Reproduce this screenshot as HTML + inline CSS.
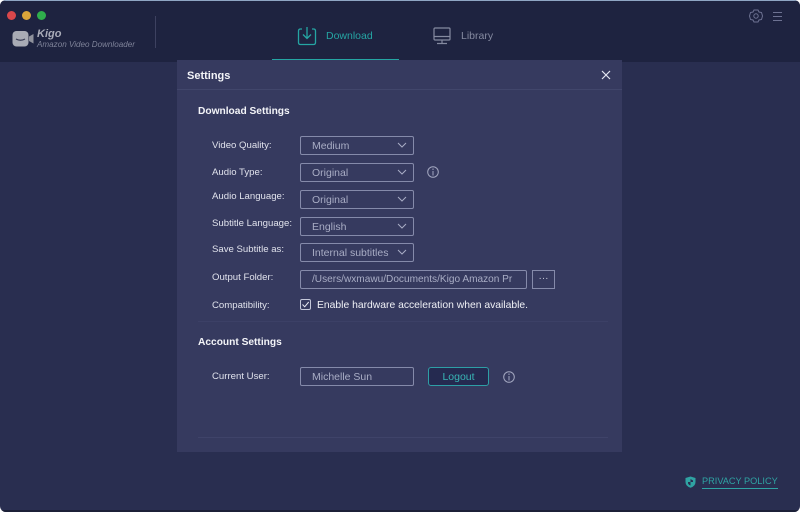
<!DOCTYPE html>
<html><head><meta charset="utf-8"><style>
html,body{margin:0;padding:0;width:800px;height:512px;overflow:hidden;background:#fff}
*{box-sizing:border-box}
body{font-family:"Liberation Sans",sans-serif;position:relative}
.a{position:absolute;white-space:nowrap}
.l{position:absolute;left:212px;margin-top:1px;font-size:9.6px;color:#e0e2ec;line-height:14px;white-space:nowrap}
.s{position:absolute;left:300px;width:114px;height:19px;border:1px solid #858aaa;border-radius:2px;font-size:10.5px;color:#a9adc5;line-height:18px;padding-left:11px;white-space:nowrap;overflow:hidden}
.c{position:absolute;left:397px;width:10px;height:6px}
h3{position:absolute;margin:1px 0 0;font-size:10.2px;font-weight:bold;color:#f3f4f8;white-space:nowrap;line-height:14px}
</style></head><body>
<div class="a" style="left:0;top:0;width:800px;height:512px;background:#292e50;border-radius:6px;overflow:hidden">
<div class="a" style="left:0;top:0;width:800px;height:62px;background:#1e2340"></div>
<div class="a" style="left:0;top:0;width:800px;height:1px;background:#8fa6c4"></div>
<div class="a" style="left:0;top:510px;width:800px;height:2px;background:#1c2038"></div>
</div>
<div class="a" style="left:7px;top:11px;width:9px;height:9px;border-radius:50%;background:#d9474b"></div>
<div class="a" style="left:22px;top:11px;width:9px;height:9px;border-radius:50%;background:#dba53a"></div>
<div class="a" style="left:37px;top:11px;width:9px;height:9px;border-radius:50%;background:#2fae4c"></div>
<svg class="a" style="left:12px;top:31px" width="22" height="16" viewBox="0 0 22 16"><rect x="0.500" y="0" width="16" height="15.500" rx="4" fill="#a9abb5"/><path d="M17 5.500l4.500-2.500v9.500l-4.500-2.500z" fill="#8f919c"/><path d="M4 8q4.500 2.500 9 0" stroke="#3a3d55" stroke-width="1.200" fill="none"/></svg>
<div class="a" style="left:37px;top:27px;font-size:11px;font-weight:bold;font-style:italic;color:#a9abb8;line-height:14px">Kigo</div>
<div class="a" style="left:37px;top:39px;font-size:8.100px;font-style:italic;color:#7f8399;line-height:12px">Amazon Video Downloader</div>
<div class="a" style="left:155px;top:16px;width:1px;height:32px;background:#3d4160"></div>

<svg class="a" style="left:297px;top:26px" width="20" height="20" viewBox="0 0 20 20" fill="none" stroke="#25a5a3" stroke-width="1.300"><path d="M5 3H3.500Q1.500 3 1.500 5V16.500Q1.500 18.500 3.500 18.500H16.500Q18.500 18.500 18.500 16.500V5Q18.500 3 16.500 3H15"/><path d="M10 1V12M6 8.500L10 12.500L14 8.500"/></svg>
<div class="a" style="left:326px;top:29px;font-size:10.500px;color:#25a5a3;line-height:14px">Download</div>
<div class="a" style="left:272px;top:59px;width:127px;height:1px;background:#25a5a3"></div>
<svg class="a" style="left:433px;top:27px" width="18" height="18" viewBox="0 0 18 18" fill="none" stroke="#858aa0" stroke-width="1.200"><rect x="1" y="1" width="16" height="12" rx="1"/><path d="M1 9.500H17M9 13V16M4 16.500H14"/></svg>
<div class="a" style="left:461px;top:29px;font-size:10.500px;color:#858aa0;line-height:14px">Library</div>
<svg class="a" style="left:749px;top:9px" width="14" height="14" viewBox="0 0 14 14" fill="none" stroke="#6d7292" stroke-width="1"><path d="M5 1H9L10 3L12.500 3.500L13.500 7L12.500 10.500L10 11L9 13H5L4 11L1.500 10.500L0.500 7L1.500 3.500L4 3Z"/><circle cx="7" cy="7" r="2.200"/></svg>
<div class="a" style="left:773px;top:12px;width:9px;height:1px;background:#6d7292"></div>
<div class="a" style="left:773px;top:16px;width:9px;height:1px;background:#6d7292"></div>
<div class="a" style="left:773px;top:20px;width:9px;height:1px;background:#6d7292"></div>

<div class="a" style="left:177px;top:60px;width:445px;height:392px;background:#363a5f"></div>
<div class="a" style="left:177px;top:89px;width:445px;height:1px;background:#41466b"></div>
<h3 style="left:187px;top:68px;font-size:11px;line-height:15px">Settings</h3>
<svg class="a" style="left:601px;top:70px" width="10" height="10" viewBox="0 0 10 10" stroke="#e4e6f2" stroke-width="1.200"><path d="M1 1L9 9M9 1L1 9"/></svg>
<h3 style="left:198px;top:104px">Download Settings</h3>

<div class="l" style="top:138px">Video Quality:</div>
<div class="s" style="top:136px">Medium</div>
<div class="l" style="top:165px">Audio Type:</div>
<div class="s" style="top:163px">Original</div>
<div class="l" style="top:189px">Audio Language:</div>
<div class="s" style="top:190px">Original</div>
<div class="l" style="top:216px">Subtitle Language:</div>
<div class="s" style="top:217px">English</div>
<div class="l" style="top:242px">Save Subtitle as:</div>
<div class="s" style="top:243px">Internal subtitles</div>
<div class="l" style="top:270px">Output Folder:</div>
<div class="s" style="top:270px;width:227px;font-size:10.100px">/Users/wxmawu/Documents/Kigo Amazon Pr</div>
<div class="l" style="top:298px">Compatibility:</div>

<svg class="c" style="top:142px" viewBox="0 0 10 6" fill="none" stroke="#a9adc5"><path d="M1 1L5 5L9 1"/></svg>
<svg class="c" style="top:169px" viewBox="0 0 10 6" fill="none" stroke="#a9adc5"><path d="M1 1L5 5L9 1"/></svg>
<svg class="c" style="top:196px" viewBox="0 0 10 6" fill="none" stroke="#a9adc5"><path d="M1 1L5 5L9 1"/></svg>
<svg class="c" style="top:223px" viewBox="0 0 10 6" fill="none" stroke="#a9adc5"><path d="M1 1L5 5L9 1"/></svg>
<svg class="c" style="top:249px" viewBox="0 0 10 6" fill="none" stroke="#a9adc5"><path d="M1 1L5 5L9 1"/></svg>

<svg class="a" style="left:427px;top:166px" width="12" height="12" viewBox="0 0 12 12" fill="none" stroke="#a3a7c0"><circle cx="6" cy="6" r="5.300"/><path d="M6 5V9.500M6 2.500V4"/></svg>
<div class="a" style="left:532px;top:270px;width:23px;height:19px;border:1px solid #858aaa;color:#c8cadb;font-size:10px;line-height:16px;text-align:center">···</div>
<div class="a" style="left:300px;top:299px;width:11px;height:11px;border:1px solid #c5c8da;border-radius:2px"></div>
<svg class="a" style="left:300px;top:299px" width="11" height="11" viewBox="0 0 11 11" fill="none" stroke="#e8e9f2"><path d="M2.500 5.500L4.700 7.800L8.700 3"/></svg>
<div class="a" style="left:317px;top:299px;font-size:10.350px;color:#f0f1f6;line-height:14px">Enable hardware acceleration when available.</div>
<div class="a" style="left:198px;top:321px;width:410px;height:1px;background:#3c4066"></div>

<h3 style="left:198px;top:335px">Account Settings</h3>
<div class="l" style="top:369px">Current User:</div>
<div class="s" style="top:367px">Michelle Sun</div>
<div class="a" style="left:428px;top:367px;width:61px;height:19px;border:1px solid #2e9fa6;border-radius:3px;background:#252a50;color:#38b5b5;font-size:10.500px;line-height:18px;text-align:center">Logout</div>
<svg class="a" style="left:503px;top:371px" width="12" height="12" viewBox="0 0 12 12" fill="none" stroke="#a3a7c0"><circle cx="6" cy="6" r="5.300"/><path d="M6 5V9.500M6 2.500V4"/></svg>
<div class="a" style="left:198px;top:437px;width:410px;height:1px;background:#3f4369"></div>

<svg class="a" style="left:685px;top:476px" width="11" height="12" viewBox="0 0 11 12"><path d="M5.500 0.500L10.500 2V6Q10.500 10 5.500 11.800Q0.500 10 0.500 6V2Z" fill="#2fa3a3"/><path d="M5.500 3V6H8V4.500L5.500 3ZM5.500 6H3V7.500Q3.800 9 5.500 9.500Z" fill="#292e50"/></svg>
<div class="a" style="left:702px;top:475px;font-size:9.200px;color:#2fa3a3;line-height:13px;border-bottom:1px solid #2fa3a3;width:76px;height:14px;overflow:hidden">PRIVACY POLICY</div>
</body></html>
